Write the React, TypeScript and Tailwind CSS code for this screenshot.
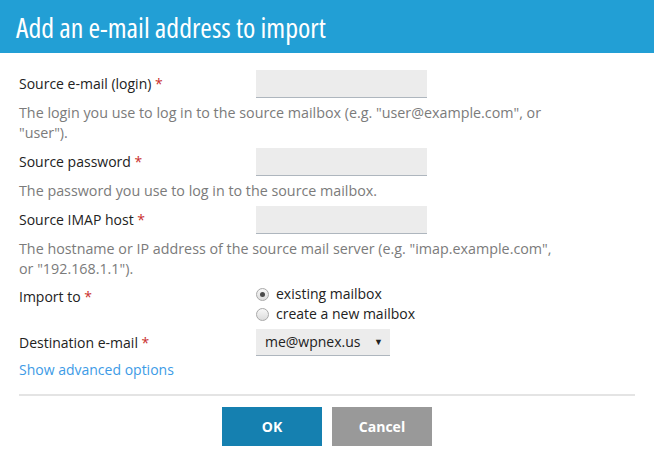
import React from "react";

const Star = () => <span className="text-[#c9302c]"> *</span>;

function Radio({ checked, label }: { checked?: boolean; label: string }) {
  return (
    <div className="flex items-center h-[20px]">
      <span className="w-[13px] h-[13px] rounded-full border border-[#a9a9a9] bg-gradient-to-b from-[#f7f7f7] to-[#dcdcdc] flex items-center justify-center">
        {checked && <span className="w-[5px] h-[5px] rounded-full bg-[#4a4a4a]" />}
      </span>
      <span className="ml-[7px] text-[#222]">{label}</span>
    </div>
  );
}

function Field({ label }: { label: string }) {
  return (
    <div className="flex items-center">
      <div className="w-[237px] text-[#222]">
        {label}
        <Star />
      </div>
      <div className="w-[171px] h-[28px] bg-[#ececec] border-b border-[#aeb6be]" />
    </div>
  );
}

function Help({ children }: { children: React.ReactNode }) {
  return <div className="mt-[5px] mb-[5px] max-w-[540px] text-[14.3px] text-[#7b7b7b]">{children}</div>;
}

export default function App() {
  return (
    <div className="w-[654px] h-[456px] bg-white text-[14px] leading-[20px]" style={{ fontFamily: '"Open Sans", sans-serif' }}>
      <div className="h-[53px] bg-[#229fd5] flex items-center px-[16px]">
        <h1 className="text-white text-[28px] leading-none [font-stretch:82%] mt-[1px]">Add an e-mail address to import</h1>
      </div>
      <div className="px-[19px] pt-[17px]">
        <Field label="Source e-mail (login)" />
        <Help>The login you use to log in to the source mailbox (e.g. "user@example.com", or "user").</Help>
        <Field label="Source password" />
        <Help>The password you use to log in to the source mailbox.</Help>
        <Field label="Source IMAP host" />
        <Help>The hostname or IP address of the source mail server (e.g. "imap.example.com", or "192.168.1.1").</Help>
        <div className="flex mt-[2px]">
          <div className="w-[237px] text-[#222] pt-[3px]">
            Import to<Star />
          </div>
          <div className="flex flex-col">
            <Radio checked label="existing mailbox" />
            <Radio label="create a new mailbox" />
          </div>
        </div>
        <div className="flex items-center mt-[5px]">
          <div className="w-[237px] text-[#222]">
            Destination e-mail<Star />
          </div>
          <div className="w-[134px] h-[27px] bg-[#ececec] border-b border-[#aeb6be] flex items-center pl-[9px] pr-[5px] text-[#222]">
            <span className="flex-1">me@wpnex.us</span>
            <span className="text-[9px] mr-[2px]">▼</span>
          </div>
        </div>
        <div className="mt-[4px] text-[#3d9be6]">Show advanced options</div>
        <div className="mt-[14px] h-[2px] bg-[#e4e4e4]" />
        <div className="flex justify-center gap-[10px] mt-[11px]">
          <button className="w-[100px] h-[39px] bg-[#1580b0] text-white font-bold">OK</button>
          <button className="w-[100px] h-[39px] bg-[#999999] text-white font-bold">Cancel</button>
        </div>
      </div>
    </div>
  );
}
